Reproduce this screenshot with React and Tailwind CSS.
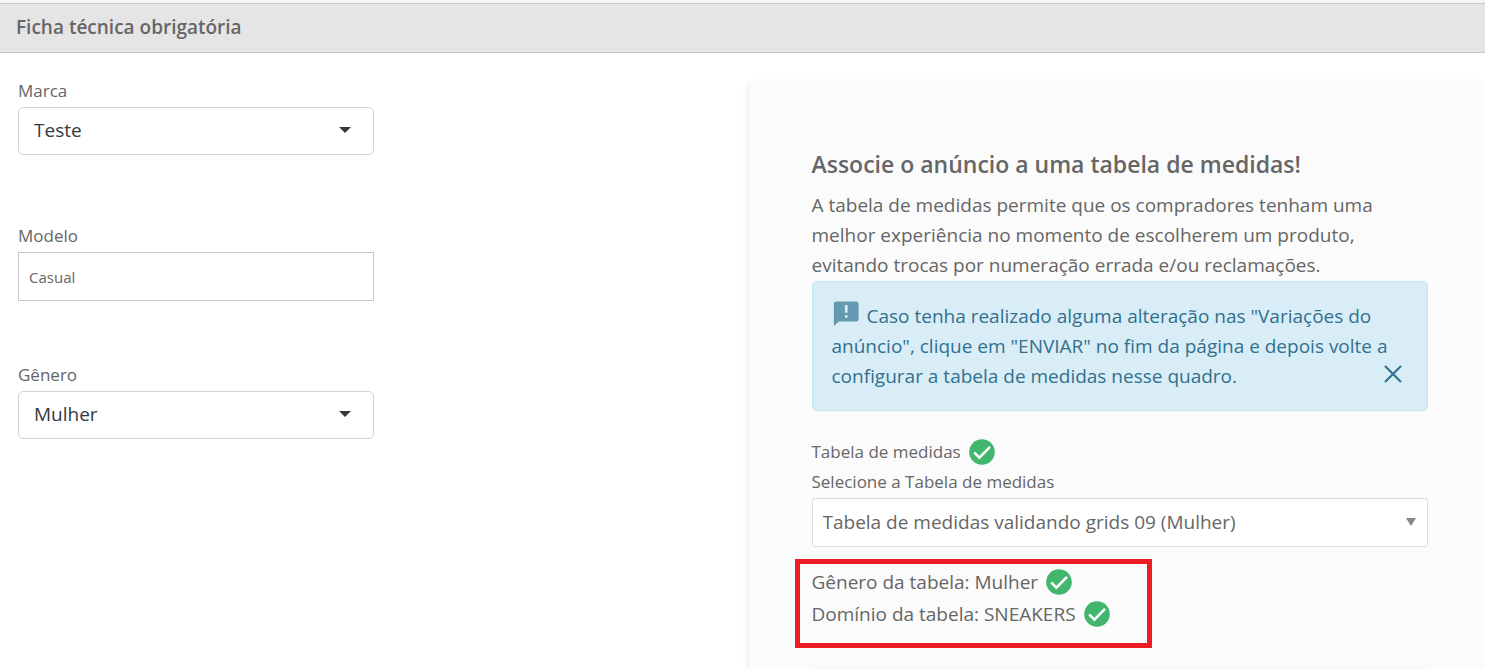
import React from "react";

const CheckIcon = () => (
  <svg viewBox="0 0 26 26" className="w-[26px] h-[26px] shrink-0" aria-hidden="true">
    <circle cx="13" cy="13" r="12.8" fill="#42b66c" />
    <path d="M5.2 13.4l5.2 5.2L21 7.8" fill="none" stroke="#fff" strokeWidth="2.6" />
  </svg>
);

const AnnouncementIcon = () => (
  <svg viewBox="0 0 26 26" className="inline-block w-[26px] h-[26px] ml-px mr-2 align-[-4px]" aria-hidden="true">
    <path
      d="M23.4 .5H3.2C1.900 .5 .9 1.500 .9 2.700V25l5-4.500h17.500c1.200 0 2.200-1 2.200-2.200V2.700C25.600 1.500 24.600 .5 23.400 .5z"
      fill="#6599b0"
    />
    <path d="M11.900 4h2.700v7.700h-2.700zM11.900 14.200h2.700v2.500h-2.700z" fill="#d9edf7" />
  </svg>
);

const SelectField = ({ id, label, value }) => (
  <div className="flex flex-col">
    <label htmlFor={id} className="text-[17px] leading-4 mb-2">
      {label}
    </label>
    <div className="relative">
      <select
        id={id}
        defaultValue={value}
        className="appearance-none w-full h-12 pl-[15px] pr-12 pb-px rounded-[5px] border border-[#ced4da] bg-white text-[19px] text-[#343a40]"
      >
        <option>{value}</option>
      </select>
      <svg
        viewBox="0 0 12 6"
        className="absolute right-[23px] top-5 w-3 h-[6px] pointer-events-none"
        aria-hidden="true"
      >
        <path d="M0 0h12L6 6z" fill="#343a40" />
      </svg>
    </div>
  </div>
);

const App = () => {
  return (
    <div className="min-h-screen flex flex-col bg-white text-[#666] font-['Open_Sans','Noto_Sans',sans-serif]">
      <header className="bg-[#f5f5f5] pt-[3px]">
        <h1 className="h-[50px] px-4 border-y border-[#c8c8c8] bg-[#e5e5e5] text-[19px] leading-[46px] font-semibold">
          Ficha técnica obrigatória
        </h1>
      </header>

      <main className="flex-1 grid grid-cols-2 gap-3 pt-[30px]">
        <form className="w-[374px] max-w-full pl-[18px]">
          <div className="mb-[73px]">
            <SelectField id="marca" label="Marca" value="Teste" />
          </div>
          <div className="flex flex-col mb-[66px]">
            <label htmlFor="modelo" className="text-[17px] leading-4 mb-2">
              Modelo
            </label>
            <input
              id="modelo"
              type="text"
              defaultValue="Casual"
              className="w-full h-[49px] px-[10px] border border-[#c8c8c8] bg-white text-[15px]"
            />
          </div>
          <SelectField id="genero" label="Gênero" value="Mulher" />
        </form>

        <section className="pt-[65px] pl-[63px] pr-[57px] bg-[#fbfbfb] shadow-[0_2px_7px_rgba(0,0,0,0.12)]">
          <h2 className="text-[23px] leading-8 font-semibold mb-[10px]">
            Associe o anúncio a uma tabela de medidas!
          </h2>
          <p className="text-[19px] leading-[30px] mb-px">
            A tabela de medidas permite que os compradores tenham uma melhor
            experiência no momento de escolherem um produto, evitando trocas por
            numeração errada e/ou reclamações.
          </p>

          <div className="relative px-[19px] py-[19px] rounded-[5px] border border-[#bce8f1] bg-[#d9edf7] text-[#31708f] text-[19px] leading-[30px]">
            <p>
              <AnnouncementIcon />
              Caso tenha realizado alguma alteração nas "Variações do anúncio",
              clique em "ENVIAR" no fim da página e depois volte a configurar a
              tabela de medidas nesse quadro.
            </p>
            <button
              type="button"
              aria-label="Fechar"
              className="absolute right-[25px] bottom-[27px] cursor-pointer"
            >
              <svg viewBox="0 0 18 18" className="w-[18px] h-[18px]" aria-hidden="true">
                <path d="M1 1l16 16M17 1L1 17" stroke="#31708f" strokeWidth="2.2" />
              </svg>
            </button>
          </div>

          <div className="flex items-center gap-2 mt-7 text-[17px] leading-6">
            <span>Tabela de medidas</span>
            <CheckIcon />
          </div>
          <label htmlFor="tabela" className="block mt-[9px] mb-2 text-[17px] leading-4">
            Selecione a Tabela de medidas
          </label>
          <div className="relative">
            <select
              id="tabela"
              defaultValue="Tabela de medidas validando grids 09 (Mulher)"
              className="appearance-none w-full h-[49px] pl-[10px] pr-10 rounded-[3px] border border-[#ddd] bg-white text-[19px]"
            >
              <option>Tabela de medidas validando grids 09 (Mulher)</option>
            </select>
            <svg
              viewBox="0 0 10 8"
              className="absolute right-3 top-5 w-[10px] h-2 pointer-events-none"
              aria-hidden="true"
            >
              <path d="M0 0h10L5 8z" fill="#888" />
            </svg>
          </div>

          <div className="w-[357px] h-[89px] mt-3 -ml-[17px] pl-3 pt-[2px] border-[5px] border-[#ee1c25] text-[19px] leading-8">
            <div className="flex items-center gap-2">
              <span>Gênero da tabela: Mulher</span>
              <CheckIcon />
            </div>
            <div className="flex items-center gap-2">
              <span>Domínio da tabela: SNEAKERS</span>
              <CheckIcon />
            </div>
          </div>
          <div className="mt-5 h-px shadow-[0_0_5px_rgba(0,0,0,0.1)]"></div>
        </section>
      </main>
    </div>
  );
};

export default App;
